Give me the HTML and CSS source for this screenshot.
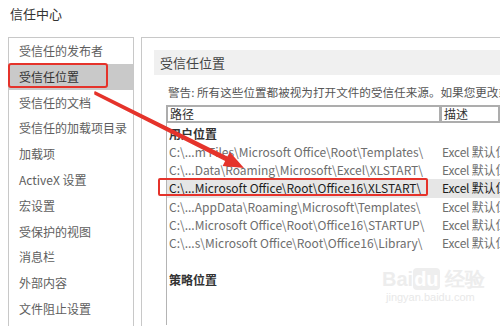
FILE: index.html
```
<!DOCTYPE html>
<html>
  <head>
    <title>信任中心</title>
    <link rel="stylesheet" href="styles.css">
  </head>
  <body>
    <div class="dialog">
      <div class="title">信任中心</div>

      <div class="main">
        <ul class="nav">
          <li class="nav-item">受信任的发布者</li>
          <li class="nav-item active">受信任位置</li>
          <li class="nav-item">受信任的文档</li>
          <li class="nav-item">受信任的加载项目录</li>
          <li class="nav-item">加载项</li>
          <li class="nav-item">ActiveX 设置</li>
          <li class="nav-item">宏设置</li>
          <li class="nav-item">受保护的视图</li>
          <li class="nav-item">消息栏</li>
          <li class="nav-item">外部内容</li>
          <li class="nav-item">文件阻止设置</li>
        </ul>

        <div class="content">
          <div class="section-head">受信任位置</div>
          <p class="warning">警告: 所有这些位置都被视为打开文件的受信任来源。如果您更改或添加位置，请确保新位置是安全的。</p>

          <div class="grid">
            <div class="grid-head">
              <div class="cell col-path">路径</div>
              <div class="cell col-desc">描述</div>
            </div>
            <div class="grid-body">
              <div class="group">用户位置</div>
              <div class="row"><span class="path">C:\...m Files\Microsoft Office\Root\Templates\</span><span class="desc">Excel 默认位置: 应用程序模板</span></div>
              <div class="row"><span class="path">C:\...Data\Roaming\Microsoft\Excel\XLSTART\</span><span class="desc">Excel 默认位置: 用户启动</span></div>
              <div class="row active"><span class="path">C:\...Microsoft Office\Root\Office16\XLSTART\</span><span class="desc">Excel 默认位置: Excel 启动</span></div>
              <div class="row"><span class="path">C:\...AppData\Roaming\Microsoft\Templates\</span><span class="desc">Excel 默认位置: 用户模板</span></div>
              <div class="row"><span class="path">C:\...Microsoft Office\Root\Office16\STARTUP\</span><span class="desc">Excel 默认位置: Office 启动</span></div>
              <div class="row"><span class="path">C:\...s\Microsoft Office\Root\Office16\Library\</span><span class="desc">Excel 默认位置: 加载项</span></div>
              <div class="group policy">策略位置</div>
            </div>
          </div>
        </div>
      </div>

      <svg class="arrow" width="500" height="326" viewBox="0 0 500 326">
        <polygon points="95,92 227.5,157.5 226.5,160.8 95,94" fill="#e5332b" stroke="#e5332b" stroke-width="1.5" stroke-linejoin="round"/>
        <polygon points="244,168 229.8,151.9 222.6,166.1" fill="#e5332b"/>
      </svg>

      <div class="watermark">
        <div class="wm-logo">Bai<span class="wm-du">du</span> 经验</div>
        <div class="wm-url">jingyan.baidu.com</div>
      </div>
    </div>
  </body>
</html>
```

FILE: styles.css
```
html, body {
  margin: 0;
  padding: 0;
}

body {
  width: 500px;
  height: 326px;
  overflow: hidden;
  background: #fff;
  font-family: "Noto Sans CJK SC", "Noto Sans", sans-serif;
  font-size: 12px;
  color: #444;
}

.dialog {
  position: relative;
  height: 326px;
  white-space: nowrap;
}

.title {
  height: 37px;
  line-height: 28px;
  padding-left: 10px;
  font-size: 13px;
  color: #333;
}

.main {
  display: flex;
  gap: 7px;
  padding-left: 8px;
  height: 289px;
}

/* left navigation */
.nav {
  list-style: none;
  margin: 0;
  padding: 0;
  width: 124px;
  flex: none;
  border: 1px solid #c8c8c8;
  border-bottom: none;
}

.nav-item {
  position: relative;
  height: 25.8px;
  line-height: 25.8px;
  padding-left: 10px;
  color: #5e5e5e;
}

.nav-item.active {
  background: #c9c9c9;
  color: #333;
}

.nav-item.active::after {
  content: "";
  position: absolute;
  left: -1px;
  top: -1px;
  width: 96px;
  height: 21px;
  border: 2px solid #e5332b;
  border-radius: 3px;
}

/* right side */
.content {
  flex: 1;
  min-width: 0;
  border-left: 1px solid #c8c8c8;
  border-top: 1px solid #c8c8c8;
  padding: 12px 0 0 12px;
  overflow: hidden;
}

.section-head {
  height: 25px;
  line-height: 25px;
  padding-left: 6px;
  background: #f0f0f0;
  font-size: 13px;
  color: #444;
}

.warning {
  margin: 9px 0 5px 14px;
  line-height: 16px;
  font-size: 11.6px;
  color: #555;
}

.grid {
  margin-left: 12px;
}

.grid-head {
  display: flex;
  gap: 3px;
  padding: 2px;
  background: #adadad;
}

.cell {
  height: 14px;
  line-height: 14px;
  padding-left: 2px;
  background: #fff;
  color: #333;
}

.col-path {
  width: 269px;
  flex: none;
}

.col-desc {
  flex: 1;
}

.grid-body {
  border-left: 1px solid #b4b4b4;
  padding-top: 2px;
  height: 200px;
}

.group {
  height: 18px;
  line-height: 18px;
  padding-left: 2px;
  font-weight: 700;
  color: #333;
}

.group.policy {
  margin-top: 19px;
}

.row {
  display: flex;
  height: 18.2px;
  line-height: 18.2px;
  padding-left: 2px;
  color: #6e6e6e;
}

.row.active {
  background: #e6e6e6;
  color: #1e1e1e;
}

.path {
  position: relative;
  width: 273px;
  flex: none;
}

.desc {
  letter-spacing: -0.2px;
}

.row.active .path::after {
  content: "";
  position: absolute;
  left: -11px;
  top: -1px;
  width: 266px;
  height: 14px;
  border: 2px solid #e5332b;
  border-radius: 2px;
}

/* overlays */
.arrow {
  position: absolute;
  left: 0;
  top: 0;
  pointer-events: none;
}

.watermark {
  position: absolute;
  left: 382px;
  top: 268px;
  color: #ededed;
  font-family: "Liberation Sans", sans-serif;
}

.wm-logo {
  font-size: 20px;
  font-weight: 700;
  line-height: 22px;
}

.wm-du {
  color: #fff;
  background: #eeeeee;
  border-radius: 4px;
  padding: 0 1px;
}

.wm-url {
  font-size: 11px;
  line-height: 14px;
  padding-left: 4px;
  color: #e8e8e8;
}
```
